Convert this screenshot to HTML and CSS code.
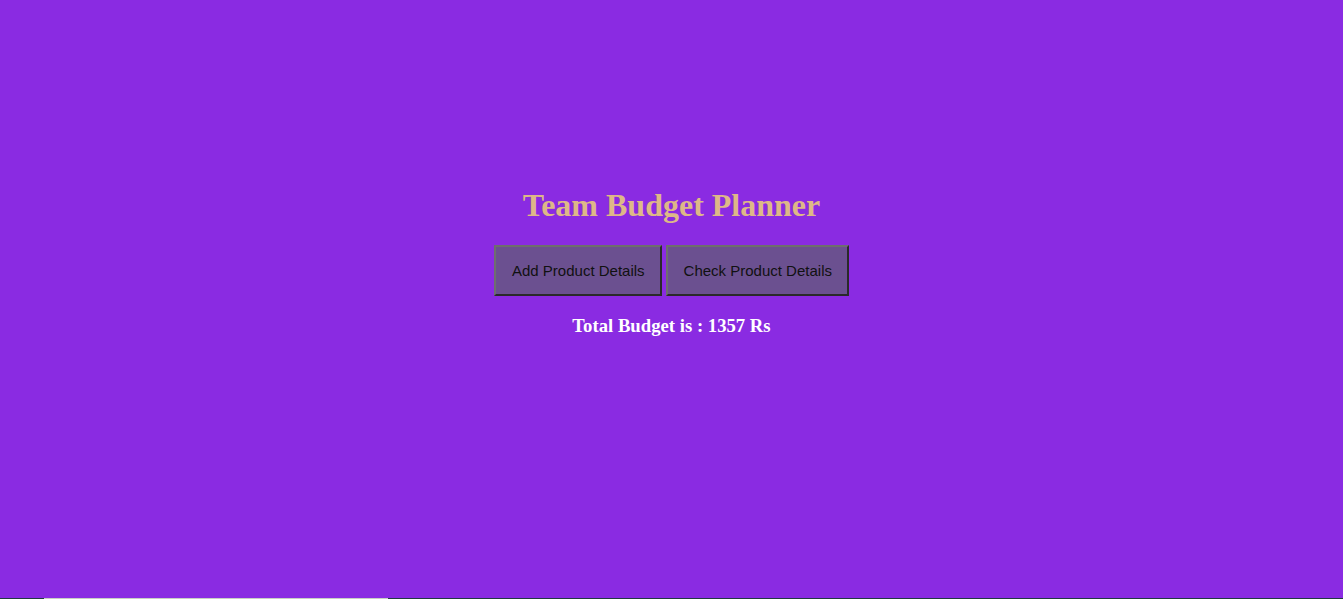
FILE: index.html
```html
<!DOCTYPE html>
<html>
<head>
<meta charset="utf-8">
<title>Team Budget Planner</title>
<link rel="stylesheet" href="styles.css">
</head>
<body>
<main class="app">
  <h1 class="title">Team Budget Planner</h1>
  <div class="actions">
    <button class="btn">Add Product Details</button>
    <button class="btn">Check Product Details</button>
  </div>
  <h3 class="total">Total Budget is : 1357 Rs</h3>
</main>
<div class="scrollbar"><div class="thumb"></div></div>
</body>
</html>
```

FILE: styles.css
```css
html, body {
  margin: 0;
  height: 100%;
}
body {
  background: #8a2be2;
  font-family: "Liberation Serif", "Times New Roman", serif;
  overflow: hidden;
}
.app {
  display: flex;
  flex-direction: column;
  align-items: center;
  padding-top: 187px;
}
.title {
  margin: 0;
  font-size: 32px;
  font-weight: bold;
  color: #deb887;
  line-height: 37px;
}
.actions {
  display: flex;
  gap: 4px;
  margin-top: 21px;
}
.btn {
  font-family: "Liberation Sans", Arial, sans-serif;
  font-size: 15px;
  line-height: 17px;
  padding: 15px 15px 15px 16px;
  background: #6b5090;
  color: #111;
  border: 2px solid;
  border-color: #6e6e6e #2a2a2a #2a2a2a #6e6e6e;
}
.total {
  margin: 19px 0 0;
  font-size: 18.72px;
  font-weight: bold;
  color: #ffffff;
}
.scrollbar {
  position: fixed;
  left: 0;
  right: 0;
  bottom: 0;
  height: 1px;
  background: #1f3a40;
}
.thumb {
  margin-left: 44px;
  width: 344px;
  height: 1px;
  background: #c8cfc4;
}
```
